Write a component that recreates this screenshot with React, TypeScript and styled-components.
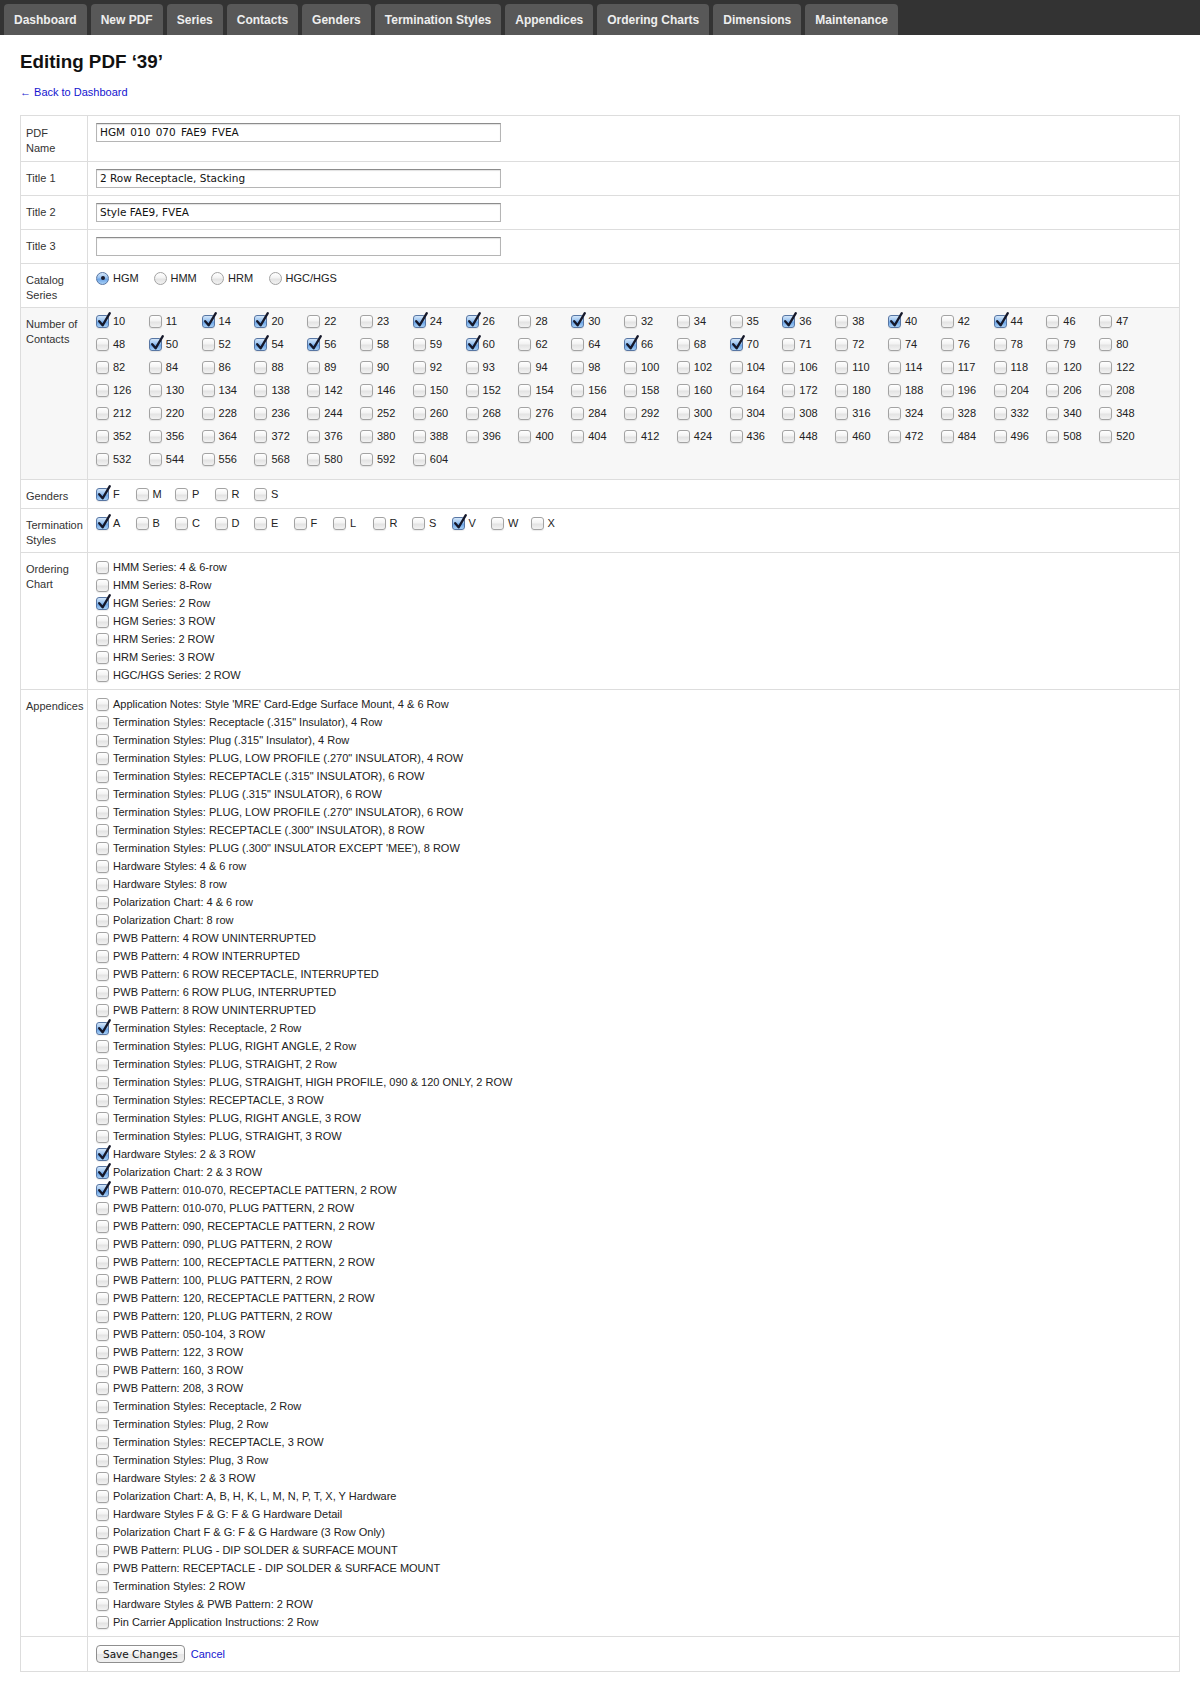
import React from "react";
import styled, { createGlobalStyle } from "styled-components";

const Global = createGlobalStyle`
  html, body { margin: 0; padding: 0; background: #fff; }
  body { font-family: "Liberation Sans", Arial, Helvetica, sans-serif; font-size: 11px; color: #222; }
  * { box-sizing: border-box; }
`;

const Page = styled.div`
  width: 1200px;
  min-height: 1689px;
  background: #fff;
`;

const Nav = styled.nav`
  display: flex;
  align-items: flex-end;
  gap: 4px;
  height: 35px;
  padding: 0 4px;
  background: #333;
`;

const Tab = styled.a`
  display: flex;
  align-items: center;
  height: 31px;
  padding: 0 10px;
  border-radius: 4px 4px 0 0;
  background: #585858;
  color: #eee;
  font-weight: bold;
  font-size: 12px;
  text-decoration: none;
  white-space: nowrap;
`;

const Main = styled.main`
  padding: 0 20px 21px;
`;

const Heading = styled.h1`
  margin: 16px 0 0;
  font-size: 18.8px;
  line-height: 22px;
  font-weight: bold;
  color: #111;
`;

const BackLink = styled.a`
  display: block;
  margin: 12px 0 16px;
  font-size: 11px;
  line-height: 14px;
  color: #1515d0;
  text-decoration: none;
`;

const Table = styled.div`
  border: 1px solid #ddd;
`;

const Row = styled.div<{ $shade?: boolean }>`
  display: grid;
  grid-template-columns: 67px 1fr;
  background: ${(p) => (p.$shade ? "#f7f7f7" : "#fff")};
  & + & {
    border-top: 1px solid #ddd;
  }
`;

const Label = styled.div<{ $extra?: number }>`
  padding: ${(p) => 9 + (p.$extra ?? 0)}px 5px ${(p) => 4 + (p.$extra ?? 0)}px;
  line-height: 15px;
  color: #333;
  border-right: 1px solid #ddd;
`;

const Field = styled.div`
  padding: 5px 5px 5px 7px;
  min-width: 0;
`;

const TextInput = styled.input`
  display: block;
  width: 405px;
  height: 19px;
  margin: 2px 0 2px 1px;
  padding: 0 3px 1px;
  border: 1px solid #b5b5b5;
  border-top-color: #8c8c8c;
  box-shadow: inset 0 1px 1px rgba(0, 0, 0, 0.12);
  font-family: "DejaVu Sans", "Liberation Sans", sans-serif;
  font-size: 10.5px;
  line-height: 16px;
  color: #111;
  background: #fff;
  outline: none;
`;

const Inline = styled.div`
  display: flex;
  flex-wrap: wrap;
`;

const Option = styled.label<{ $w?: string; $h?: number; $mb?: number }>`
  display: flex;
  align-items: center;
  ${(p) => (p.$w ? `width: ${p.$w};` : "")}
  height: ${(p) => p.$h ?? 18}px;
  margin-bottom: ${(p) => p.$mb ?? 0}px;
  padding-left: 1px;
  color: #222;
  white-space: nowrap;
`;

const OptText = styled.span`
  margin-left: 4px;
`;

const Box = styled.span<{ $checked?: boolean }>`
  position: relative;
  flex: none;
  width: 13px;
  height: 13px;
  border: 1px solid ${(p) => (p.$checked ? "#5876a3" : "#a3a3a3")};
  border-radius: 3px;
  background: ${(p) =>
    p.$checked
      ? "linear-gradient(#d3e6fa, #97c1ef 45%, #6aa3e6 55%, #a8d0f6)"
      : "linear-gradient(#ffffff, #f3f3f3 45%, #e3e3e3 55%, #f2f2f2)"};
  box-shadow: 0 1px 1px rgba(0, 0, 0, 0.08);
`;

const Check = styled.svg`
  position: absolute;
  left: 0px;
  top: -4px;
  width: 14px;
  height: 16px;
  overflow: visible;
`;

const Circle = styled.span<{ $checked?: boolean }>`
  position: relative;
  flex: none;
  display: flex;
  align-items: center;
  justify-content: center;
  width: 13px;
  height: 13px;
  border-radius: 50%;
  border: 1px solid ${(p) => (p.$checked ? "#5876a3" : "#a3a3a3")};
  background: ${(p) =>
    p.$checked
      ? "linear-gradient(#d3e6fa, #97c1ef 45%, #6aa3e6 55%, #a8d0f6)"
      : "linear-gradient(#ffffff, #f3f3f3 45%, #e3e3e3 55%, #f2f2f2)"};
`;

const Dot = styled.span`
  width: 4px;
  height: 4px;
  border-radius: 50%;
  background: #1b1b2b;
`;

const Stack = styled.div`
  display: flex;
  flex-direction: column;
`;

const Actions = styled.div`
  display: flex;
  align-items: center;
`;

const Button = styled.button`
  height: 18px;
  margin: 3px 0 3px 1px;
  padding: 0 6px;
  border: 1px solid #8e8e8e;
  border-radius: 4px;
  background: linear-gradient(#ffffff, #f4f4f4 50%, #e6e6e6 51%, #f0f0f0);
  font-family: "DejaVu Sans", "Liberation Sans", sans-serif;
  font-size: 10.5px;
  line-height: 16px;
  color: #111;
`;

const Cancel = styled.a`
  margin-left: 6px;
  color: #1515d0;
  text-decoration: none;
  font-size: 11px;
`;

function Checkbox({ checked }: { checked?: boolean }) {
  return (
    <Box $checked={checked}>
      {checked && (
        <Check viewBox="0 0 14 16">
          <path
            d="M2.2 9.2 L5.6 13.3 L12.8 1.2"
            fill="none"
            stroke="#15182a"
            strokeWidth="2.3"
            strokeLinecap="round"
            strokeLinejoin="round"
          />
        </Check>
      )}
    </Box>
  );
}

function Radio({ checked }: { checked?: boolean }) {
  return <Circle $checked={checked}>{checked && <Dot />}</Circle>;
}

const tabs = [
  "Dashboard",
  "New PDF",
  "Series",
  "Contacts",
  "Genders",
  "Termination Styles",
  "Appendices",
  "Ordering Charts",
  "Dimensions",
  "Maintenance",
];

const contacts = [
  10, 11, 14, 20, 22, 23, 24, 26, 28, 30, 32, 34, 35, 36, 38, 40, 42, 44, 46, 47,
  48, 50, 52, 54, 56, 58, 59, 60, 62, 64, 66, 68, 70, 71, 72, 74, 76, 78, 79, 80,
  82, 84, 86, 88, 89, 90, 92, 93, 94, 98, 100, 102, 104, 106, 110, 114, 117, 118, 120, 122,
  126, 130, 134, 138, 142, 146, 150, 152, 154, 156, 158, 160, 164, 172, 180, 188, 196, 204, 206, 208,
  212, 220, 228, 236, 244, 252, 260, 268, 276, 284, 292, 300, 304, 308, 316, 324, 328, 332, 340, 348,
  352, 356, 364, 372, 376, 380, 388, 396, 400, 404, 412, 424, 436, 448, 460, 472, 484, 496, 508, 520,
  532, 544, 556, 568, 580, 592, 604,
];
const checkedContacts = new Set([10, 14, 20, 24, 26, 30, 36, 40, 44, 50, 54, 56, 60, 66, 70]);

const genders = ["F", "M", "P", "R", "S"];
const terminations = ["A", "B", "C", "D", "E", "F", "L", "R", "S", "V", "W", "X"];
const checkedTerm = new Set(["A", "V"]);

const ordering = [
  "HMM Series: 4 & 6-row",
  "HMM Series: 8-Row",
  "HGM Series: 2 Row",
  "HGM Series: 3 ROW",
  "HRM Series: 2 ROW",
  "HRM Series: 3 ROW",
  "HGC/HGS Series: 2 ROW",
];

const appendices = [
  "Application Notes: Style 'MRE' Card-Edge Surface Mount, 4 & 6 Row",
  "Termination Styles: Receptacle (.315\" Insulator), 4 Row",
  "Termination Styles: Plug (.315\" Insulator), 4 Row",
  "Termination Styles: PLUG, LOW PROFILE (.270\" INSULATOR), 4 ROW",
  "Termination Styles: RECEPTACLE (.315\" INSULATOR), 6 ROW",
  "Termination Styles: PLUG (.315\" INSULATOR), 6 ROW",
  "Termination Styles: PLUG, LOW PROFILE (.270\" INSULATOR), 6 ROW",
  "Termination Styles: RECEPTACLE (.300\" INSULATOR), 8 ROW",
  "Termination Styles: PLUG (.300\" INSULATOR EXCEPT 'MEE'), 8 ROW",
  "Hardware Styles: 4 & 6 row",
  "Hardware Styles: 8 row",
  "Polarization Chart: 4 & 6 row",
  "Polarization Chart: 8 row",
  "PWB Pattern: 4 ROW UNINTERRUPTED",
  "PWB Pattern: 4 ROW INTERRUPTED",
  "PWB Pattern: 6 ROW RECEPTACLE, INTERRUPTED",
  "PWB Pattern: 6 ROW PLUG, INTERRUPTED",
  "PWB Pattern: 8 ROW UNINTERRUPTED",
  "Termination Styles: Receptacle, 2 Row",
  "Termination Styles: PLUG, RIGHT ANGLE, 2 Row",
  "Termination Styles: PLUG, STRAIGHT, 2 Row",
  "Termination Styles: PLUG, STRAIGHT, HIGH PROFILE, 090 & 120 ONLY, 2 ROW",
  "Termination Styles: RECEPTACLE, 3 ROW",
  "Termination Styles: PLUG, RIGHT ANGLE, 3 ROW",
  "Termination Styles: PLUG, STRAIGHT, 3 ROW",
  "Hardware Styles: 2 & 3 ROW",
  "Polarization Chart: 2 & 3 ROW",
  "PWB Pattern: 010-070, RECEPTACLE PATTERN, 2 ROW",
  "PWB Pattern: 010-070, PLUG PATTERN, 2 ROW",
  "PWB Pattern: 090, RECEPTACLE PATTERN, 2 ROW",
  "PWB Pattern: 090, PLUG PATTERN, 2 ROW",
  "PWB Pattern: 100, RECEPTACLE PATTERN, 2 ROW",
  "PWB Pattern: 100, PLUG PATTERN, 2 ROW",
  "PWB Pattern: 120, RECEPTACLE PATTERN, 2 ROW",
  "PWB Pattern: 120, PLUG PATTERN, 2 ROW",
  "PWB Pattern: 050-104, 3 ROW",
  "PWB Pattern: 122, 3 ROW",
  "PWB Pattern: 160, 3 ROW",
  "PWB Pattern: 208, 3 ROW",
  "Termination Styles: Receptacle, 2 Row",
  "Termination Styles: Plug, 2 Row",
  "Termination Styles: RECEPTACLE, 3 ROW",
  "Termination Styles: Plug, 3 Row",
  "Hardware Styles: 2 & 3 ROW",
  "Polarization Chart: A, B, H, K, L, M, N, P, T, X, Y Hardware",
  "Hardware Styles F & G: F & G Hardware Detail",
  "Polarization Chart F & G: F & G Hardware (3 Row Only)",
  "PWB Pattern: PLUG - DIP SOLDER & SURFACE MOUNT",
  "PWB Pattern: RECEPTACLE - DIP SOLDER & SURFACE MOUNT",
  "Termination Styles: 2 ROW",
  "Hardware Styles & PWB Pattern: 2 ROW",
  "Pin Carrier Application Instructions: 2 Row",
];
const checkedAppendices = new Set([18, 25, 26, 27]);

const series = ["HGM", "HMM", "HRM", "HGC/HGS"];

export default function App() {
  return (
    <Page>
      <Global />
      <Nav>
        {tabs.map((t) => (
          <Tab key={t} href="#">
            {t}
          </Tab>
        ))}
      </Nav>
      <Main>
        <Heading>Editing PDF ‘39’</Heading>
        <BackLink href="#">← Back to Dashboard</BackLink>
        <Table>
          <Row>
            <Label $extra={1}>
              PDF
              <br />
              Name
            </Label>
            <Field>
              <TextInput defaultValue="HGM_010_070_FAE9_FVEA" />
            </Field>
          </Row>
          <Row>
            <Label>Title 1</Label>
            <Field>
              <TextInput defaultValue="2 Row Receptacle, Stacking" />
            </Field>
          </Row>
          <Row>
            <Label>Title 2</Label>
            <Field>
              <TextInput defaultValue="Style FAE9, FVEA" />
            </Field>
          </Row>
          <Row>
            <Label>Title 3</Label>
            <Field>
              <TextInput defaultValue="" />
            </Field>
          </Row>
          <Row>
            <Label>
              Catalog
              <br />
              Series
            </Label>
            <Field>
              <Inline>
                {series.map((s, i) => (
                  <Option key={s} $w={i < 3 ? "57.5px" : undefined}>
                    <Radio checked={i === 0} />
                    <OptText>{s}</OptText>
                  </Option>
                ))}
              </Inline>
            </Field>
          </Row>
          <Row $shade>
            <Label>
              Number of
              <br />
              Contacts
            </Label>
            <Field>
              <Inline>
                {contacts.map((c) => (
                  <Option key={c} $w="52.8px" $h={16} $mb={7}>
                    <Checkbox checked={checkedContacts.has(c)} />
                    <OptText>{c}</OptText>
                  </Option>
                ))}
              </Inline>
            </Field>
          </Row>
          <Row>
            <Label>Genders</Label>
            <Field>
              <Inline>
                {genders.map((g) => (
                  <Option key={g} $w="39.5px">
                    <Checkbox checked={g === "F"} />
                    <OptText>{g}</OptText>
                  </Option>
                ))}
              </Inline>
            </Field>
          </Row>
          <Row>
            <Label>
              Termination
              <br />
              Styles
            </Label>
            <Field>
              <Inline>
                {terminations.map((t) => (
                  <Option key={t} $w="39.5px">
                    <Checkbox checked={checkedTerm.has(t)} />
                    <OptText>{t}</OptText>
                  </Option>
                ))}
              </Inline>
            </Field>
          </Row>
          <Row>
            <Label>
              Ordering
              <br />
              Chart
            </Label>
            <Field>
              <Stack>
                {ordering.map((o, i) => (
                  <Option key={o}>
                    <Checkbox checked={i === 2} />
                    <OptText>{o}</OptText>
                  </Option>
                ))}
              </Stack>
            </Field>
          </Row>
          <Row>
            <Label>Appendices</Label>
            <Field>
              <Stack>
                {appendices.map((a, i) => (
                  <Option key={i}>
                    <Checkbox checked={checkedAppendices.has(i)} />
                    <OptText>{a}</OptText>
                  </Option>
                ))}
              </Stack>
            </Field>
          </Row>
          <Row>
            <Label />
            <Field>
              <Actions>
                <Button type="button">Save Changes</Button>
                <Cancel href="#">Cancel</Cancel>
              </Actions>
            </Field>
          </Row>
        </Table>
      </Main>
    </Page>
  );
}
